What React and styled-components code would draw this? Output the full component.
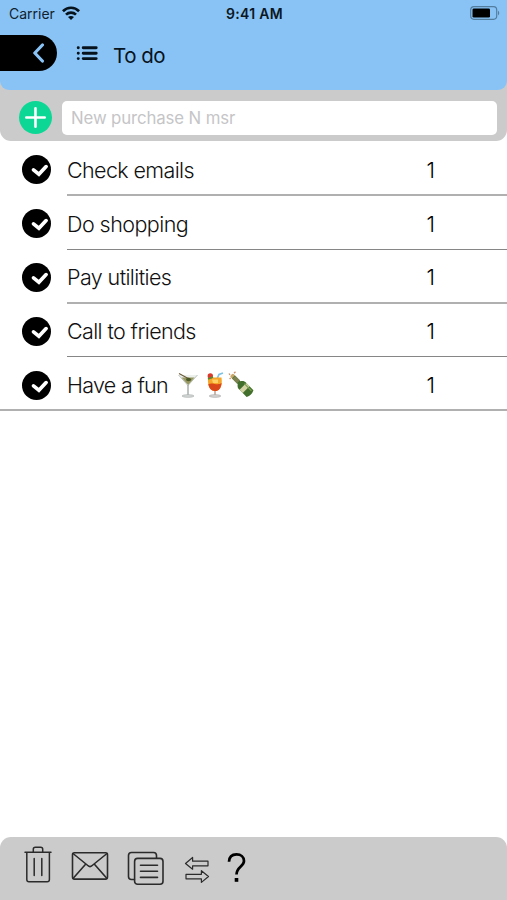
import styled, { createGlobalStyle } from "styled-components";

const GlobalStyle = createGlobalStyle`
  * {
    box-sizing: border-box;
  }
  body {
    margin: 0;
    background: #fff;
    color: #000;
    font-family: Inter, "Liberation Sans", sans-serif;
  }
`;

const Screen = styled.div`
  width: 507px;
  height: 900px;
  display: flex;
  flex-direction: column;
  overflow: hidden;
`;

const Top = styled.div`
  height: 141px;
  flex-shrink: 0;
  background: #cbcbcb;
  border-radius: 0 0 11px 11px;
`;

const Header = styled.header`
  height: 90px;
  background: #89c3f5;
  border-radius: 0 0 9px 9px;
`;

const StatusBar = styled.div`
  height: 28px;
  padding: 0 7px 2px 9px;
  display: grid;
  grid-template-columns: 1fr auto 1fr;
  align-items: center;
`;

const Carrier = styled.div`
  display: flex;
  align-items: center;
  gap: 7px;
  font-size: 14px;
  color: #10222f;
`;

const Time = styled.div`
  font-size: 14px;
  font-weight: 600;
  letter-spacing: 0.3px;
  color: #0b1722;
`;

const Battery = styled.svg`
  justify-self: end;
`;

const NavBar = styled.div`
  height: 50px;
  padding-top: 7px;
  display: flex;
  align-items: flex-start;
`;

const BackButton = styled.div`
  width: 57px;
  height: 36px;
  padding-right: 12px;
  display: flex;
  align-items: center;
  justify-content: flex-end;
  background: #000;
  border-radius: 0 18px 18px 0;
`;

const ListIcon = styled.svg`
  margin: 10px 0 0 19px;
`;

const Title = styled.h1`
  margin: 7px 0 0 15px;
  font-size: 20.5px;
  line-height: 28px;
  font-weight: 400;
  letter-spacing: -0.5px;
  color: #07131d;
`;

const AddRow = styled.div`
  height: 51px;
  padding: 4px 10px 0 19px;
  display: flex;
  align-items: center;
`;

const AddButton = styled.div`
  width: 33px;
  height: 33px;
  display: flex;
  align-items: center;
  justify-content: center;
  background: #0cd795;
  border-radius: 50%;
`;

const Field = styled.input`
  flex: 1;
  height: 34px;
  margin-left: 10px;
  padding: 0 9px;
  border: none;
  border-radius: 5px;
  background: #fff;
  font-family: inherit;
  font-size: 16.8px;
  letter-spacing: -0.12px;
  &::placeholder {
    color: #c5c5c7;
    opacity: 1;
  }
`;

const List = styled.ul`
  flex: 1;
  margin: 0;
  padding: 0.5px 0 0;
  list-style: none;
`;

const Item = styled.li`
  height: 53.8px;
`;

const ItemLine = styled.div`
  height: 100%;
  padding: 2.9px 72px 0 22px;
  display: flex;
  align-items: center;
`;

const Divider = styled.div`
  height: ${(props) => (props.$thick ? 2 : 1)}px;
  margin-top: ${(props) => (props.$thick ? "-1px" : "-0.5px")};
  margin-bottom: ${(props) => (props.$thick ? "-1px" : "-0.5px")};
  margin-left: ${(props) => (props.$full ? 0 : 67)}px;
  background: ${(props) => (props.$thick ? "#b0b0b0" : "#868686")};
`;

const Label = styled.span`
  margin-left: 16px;
  font-size: 21.5px;
  font-weight: 300;
  letter-spacing: ${(props) => props.$spacing}px;
  line-height: 30px;
  white-space: pre;
  color: #111;
`;

const Drinks = styled.svg`
  margin-left: 8px;
`;

const Count = styled.span`
  margin-left: auto;
  font-size: 21.5px;
  font-weight: 300;
  line-height: 30px;
`;

const Toolbar = styled.footer`
  height: 63px;
  flex-shrink: 0;
  padding: 9px 0 0 24px;
  display: flex;
  align-items: flex-start;
  background: #cbcbcb;
  border-radius: 11px 11px 0 0;
`;

const ToolIcon = styled.svg`
  margin: ${(props) => props.$top}px 0 0 ${(props) => props.$left}px;
  fill: none;
  stroke: #2b2b2b;
  stroke-width: ${(props) => props.$stroke || 1.5};
  stroke-linejoin: round;
  stroke-linecap: round;
`;

const Wifi = () => (
  <svg width="18" height="14" viewBox="0 0 18 14">
    <g fill="none" stroke="#06121c" strokeWidth="2.7">
      <path d="M0.9 5.2C5.4 0.6 12.6 0.6 17.1 5.2" />
      <path d="M4 8.6C6.8 5.9 11.2 5.9 14 8.6" />
    </g>
    <path d="M6 11C7.8 9.5 10.2 9.5 12 11L9 14Z" fill="#06121c" />
  </svg>
);

const CheckMark = () => (
  <svg width="29" height="29" viewBox="0 0 29 29">
    <circle cx="14.5" cy="14.5" r="14.5" fill="#000" />
    <path
      d="M11.5 14.9L16.9 19.2L24.1 11.6"
      fill="none"
      stroke="#fff"
      strokeWidth="3.7"
      strokeLinecap="round"
    />
  </svg>
);

const DrinkIcons = () => (
  <Drinks width="82" height="28" viewBox="0 0 82 28">
    <g>
      <path d="M2.5 4L12 14.5L21.5 4" fill="#edf1ee" stroke="#b4bdb8" strokeWidth="0.9" />
      <path d="M5.5 6.5H18.5L12.2 14Z" fill="#989962" />
      <path d="M3 2.5L15 9" stroke="#6a5b38" strokeWidth="1.1" />
      <ellipse cx="12.5" cy="8.5" rx="2.4" ry="1.8" fill="#4a5a26" />
      <path d="M12 14V24" stroke="#9aa39e" strokeWidth="1.3" />
      <ellipse cx="12" cy="25" rx="6" ry="1.3" fill="#d3d7d5" stroke="#aab0ad" strokeWidth="0.7" />
    </g>
    <g>
      <path d="M41 8L43 3.4L47 2" fill="none" stroke="#7fc2e4" strokeWidth="1.7" />
      <path d="M32 6.5H45.5C46.5 13 45 20 39 20C33 20 31.5 13 32 6.5Z" fill="#f6a62a" />
      <path d="M32.3 13C37 11 41 15 45.6 12C45 17.5 43 20 39 20C35 20 33 17 32.3 13Z" fill="#d9461a" />
      <path d="M36 8.5H42V12H37Z" fill="#ffd066" />
      <circle cx="34.3" cy="4.9" r="2.7" fill="#d93a2c" />
      <path d="M32 8L37 6" stroke="#568b32" strokeWidth="1.7" />
      <path d="M39 20V24" stroke="#b9a092" strokeWidth="1.5" />
      <ellipse cx="39" cy="25" rx="5.8" ry="1.3" fill="#d6d4d2" stroke="#aaa" strokeWidth="0.7" />
    </g>
    <g transform="translate(56 4.5) rotate(-45)">
      <rect x="-2.2" y="-1" width="4.4" height="5" rx="1.5" fill="#c9a768" />
      <path d="M-2 2H2V10C4.5 12 4.8 13 4.8 15.5V25.5Q0 28 -4.8 25.5V15.5C-4.8 13 -4.5 12 -2 10Z" fill="#426f2b" />
      <path d="M-2.2 2.5H2.2V9H-2.2Z" fill="#7d8250" />
      <path d="M-4.8 15.5H4.8V20H-4.8Z" fill="#d5d4a6" />
      <path d="M3 14.5V24.5" stroke="#7ca355" strokeWidth="1.2" />
    </g>
    <path d="M54 4L53 2.5M58 2.2L59.5 0.8M54.6 7L53.6 8" stroke="#c98f68" strokeWidth="1.3" />
  </Drinks>
);

const items = [
  { name: "Check emails", count: 1, spacing: -0.62 },
  { name: "Do shopping", count: 1, spacing: -0.55 },
  { name: "Pay utilities", count: 1, spacing: -0.6 },
  { name: "Call to friends", count: 1, spacing: -0.62 },
  { name: "Have a fun", count: 1, spacing: -0.7, drinks: true },
];

const App = () => {
  return (
    <Screen>
      <GlobalStyle />
      <Top>
        <Header>
          <StatusBar>
            <Carrier>
              Carrier
              <Wifi />
            </Carrier>
            <Time>9:41 AM</Time>
            <Battery width="30" height="14" viewBox="0 0 30 14">
              <rect x="0.7" y="0.7" width="26" height="12.6" rx="3.2" fill="none" stroke="#527d9f" strokeWidth="1.2" />
              <rect x="2.5" y="2.5" width="17.5" height="9" rx="1.3" fill="#000" />
              <path d="M28 4.5Q30.5 7 28 9.5Z" fill="#527d9f" />
            </Battery>
          </StatusBar>
          <NavBar>
            <BackButton>
              <svg width="13" height="20" viewBox="0 0 13 20">
                <path d="M10.4 2L2.8 10L10.4 18" fill="none" stroke="#89c3f5" strokeWidth="3.2" strokeLinecap="round" strokeLinejoin="round" />
              </svg>
            </BackButton>
            <ListIcon width="22" height="16" viewBox="0 0 22 16">
              <g stroke="#06121c" strokeWidth="2.9" strokeLinecap="round">
                <path d="M7.2 2.8H20.2M7.2 8.2H20.2M7.2 13.6H20.2" />
                <path d="M2.2 2.8H2.3M2.2 8.2H2.3M2.2 13.6H2.3" />
              </g>
            </ListIcon>
            <Title>To do</Title>
          </NavBar>
        </Header>
        <AddRow>
          <AddButton>
            <svg width="21" height="21" viewBox="0 0 21 21">
              <path d="M10.5 1.3V19.7M1.3 10.5H19.7" stroke="#fff" strokeWidth="2.6" strokeLinecap="round" />
            </svg>
          </AddButton>
          <Field placeholder="New purchase N msr" />
        </AddRow>
      </Top>
      <List>
        {items.map((item, index) => (
          <Item key={item.name}>
            <ItemLine>
              <CheckMark />
              <Label $spacing={item.spacing}>{item.name}</Label>
              {item.drinks && <DrinkIcons />}
              <Count>{item.count}</Count>
            </ItemLine>
            <Divider $thick={index % 2 === 0} $full={index === items.length - 1} />
          </Item>
        ))}
      </List>
      <Toolbar>
        <ToolIcon width="28" height="38" viewBox="0 0 28 38" $top={0} $left={0}>
          <path d="M1 6.2H27M2.8 6.2V33.5Q2.8 35.8 5 35.8H23.2Q25.4 35.8 25.4 33.5V6.2" />
          <path d="M9.3 6V3.2Q9.3 1.2 11.3 1.2H16.7Q18.7 1.2 18.7 3.2V6M10.2 12.5V29.5M17.8 12.5V29.5" />
        </ToolIcon>
        <ToolIcon width="38" height="30" viewBox="0 0 38 30" $top={5} $left={19} $stroke={1.6}>
          <rect x="1.5" y="1.8" width="35" height="26.3" rx="2" />
          <path d="M2 2.5L16.8 14.5Q19 16.6 21.2 14.5L36 2.5M2 27.5L14.8 13M36 27.5L23.2 13" />
        </ToolIcon>
        <ToolIcon width="38" height="35" viewBox="0 0 38 35" $top={5} $left={18} $stroke={1.6}>
          <path d="M7.4 28.5H4.5Q1.5 28.5 1.5 25.5V4.5Q1.5 1.5 4.5 1.5H26.5Q29.5 1.5 29.5 4.5V7.2" />
          <rect x="7.6" y="7.4" width="28.4" height="25.8" rx="3" />
          <path d="M13.5 14.2H30.5M13.5 20.3H30.5M13.5 26.4H30.5" />
        </ToolIcon>
        <ToolIcon width="26" height="28" viewBox="0 0 26 28" $top={10} $left={18.5} $stroke={1.2}>
          <path d="M1.5 7.5L8.6 1.5V5.2H24V9.8H8.6V13.2Z" />
          <path d="M24.5 20.5L17.4 14.7V18.3H2V22.8H17.4V26.4Z" />
        </ToolIcon>
        <ToolIcon width="20" height="32" viewBox="0 0 20 32" $top={6} $left={17}>
          <path
            d="M2 9.8C2.2 4.8 5 2.4 9.5 2.4C14 2.4 17 4.9 17 8.9C17 14.5 9.5 14.6 9.5 22.6"
            stroke="#000"
            strokeWidth="2.7"
            strokeLinecap="butt"
          />
          <rect x="7.7" y="26" width="3.6" height="3.8" fill="#000" stroke="none" />
        </ToolIcon>
      </Toolbar>
    </Screen>
  );
};

export default App;
